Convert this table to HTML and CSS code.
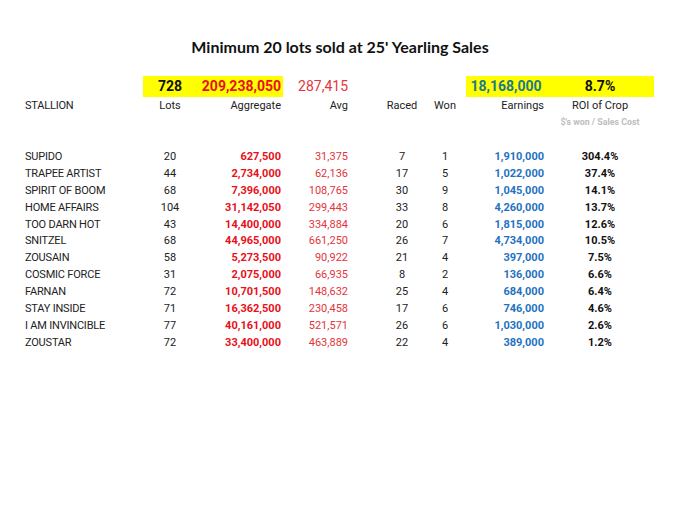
FILE: index.html
```html
<!DOCTYPE html>
<html>
<head>
<meta charset="utf-8">
<link rel="stylesheet" href="styles.css">
</head>
<body>
<h1 class="title">Minimum 20 lots sold at 25' Yearling Sales</h1>
<div class="sheet">
  <div class="row totals">
    <span></span>
    <span class="c hl tot-black">728</span>
    <span class="r hl tot-red">209,238,050</span>
    <span class="r avg-tot">287,415</span>
    <span></span>
    <span></span>
    <span class="c hl tot-teal">18,168,000</span>
    <span class="c hl tot-black">8.7%</span>
  </div>
  <div class="row labels">
    <span class="name">STALLION</span>
    <span class="c">Lots</span>
    <span class="r">Aggregate</span>
    <span class="r">Avg</span>
    <span class="c">Raced</span>
    <span class="c">Won</span>
    <span class="r">Earnings</span>
    <span class="c">ROI of Crop</span>
  </div>
  <div class="row sub">
    <span></span><span></span><span></span><span></span><span></span><span></span><span></span>
    <span class="c note">$'s won / Sales Cost</span>
  </div>
  <div class="rows">
    <div class="row data"><span class="name">SUPIDO</span><span class="c">20</span><span class="r agg">627,500</span><span class="r avg">31,375</span><span class="c">7</span><span class="c">1</span><span class="r earn">1,910,000</span><span class="c roi">304.4%</span></div>
    <div class="row data"><span class="name">TRAPEE ARTIST</span><span class="c">44</span><span class="r agg">2,734,000</span><span class="r avg">62,136</span><span class="c">17</span><span class="c">5</span><span class="r earn">1,022,000</span><span class="c roi">37.4%</span></div>
    <div class="row data"><span class="name">SPIRIT OF BOOM</span><span class="c">68</span><span class="r agg">7,396,000</span><span class="r avg">108,765</span><span class="c">30</span><span class="c">9</span><span class="r earn">1,045,000</span><span class="c roi">14.1%</span></div>
    <div class="row data"><span class="name">HOME AFFAIRS</span><span class="c">104</span><span class="r agg">31,142,050</span><span class="r avg">299,443</span><span class="c">33</span><span class="c">8</span><span class="r earn">4,260,000</span><span class="c roi">13.7%</span></div>
    <div class="row data"><span class="name">TOO DARN HOT</span><span class="c">43</span><span class="r agg">14,400,000</span><span class="r avg">334,884</span><span class="c">20</span><span class="c">6</span><span class="r earn">1,815,000</span><span class="c roi">12.6%</span></div>
    <div class="row data"><span class="name">SNITZEL</span><span class="c">68</span><span class="r agg">44,965,000</span><span class="r avg">661,250</span><span class="c">26</span><span class="c">7</span><span class="r earn">4,734,000</span><span class="c roi">10.5%</span></div>
    <div class="row data"><span class="name">ZOUSAIN</span><span class="c">58</span><span class="r agg">5,273,500</span><span class="r avg">90,922</span><span class="c">21</span><span class="c">4</span><span class="r earn">397,000</span><span class="c roi">7.5%</span></div>
    <div class="row data"><span class="name">COSMIC FORCE</span><span class="c">31</span><span class="r agg">2,075,000</span><span class="r avg">66,935</span><span class="c">8</span><span class="c">2</span><span class="r earn">136,000</span><span class="c roi">6.6%</span></div>
    <div class="row data"><span class="name">FARNAN</span><span class="c">72</span><span class="r agg">10,701,500</span><span class="r avg">148,632</span><span class="c">25</span><span class="c">4</span><span class="r earn">684,000</span><span class="c roi">6.4%</span></div>
    <div class="row data"><span class="name">STAY INSIDE</span><span class="c">71</span><span class="r agg">16,362,500</span><span class="r avg">230,458</span><span class="c">17</span><span class="c">6</span><span class="r earn">746,000</span><span class="c roi">4.6%</span></div>
    <div class="row data"><span class="name">I AM INVINCIBLE</span><span class="c">77</span><span class="r agg">40,161,000</span><span class="r avg">521,571</span><span class="c">26</span><span class="c">6</span><span class="r earn">1,030,000</span><span class="c roi">2.6%</span></div>
    <div class="row data"><span class="name">ZOUSTAR</span><span class="c">72</span><span class="r agg">33,400,000</span><span class="r avg">463,889</span><span class="c">22</span><span class="c">4</span><span class="r earn">389,000</span><span class="c roi">1.2%</span></div>
  </div>
</div>
</body>
</html>
```
FILE: styles.css
```css
html, body {
  margin: 0;
  padding: 0;
  background: #ffffff;
}
body {
  width: 680px;
  height: 506px;
  font-family: Roboto, "Liberation Sans", sans-serif;
  color: #222222;
}
.title {
  margin: 0;
  padding-top: 37px;
  height: 20px;
  line-height: 20px;
  text-align: center;
  font-family: Lato, "Open Sans", sans-serif;
  font-weight: 700;
  font-size: 16px;
  color: #111111;
}
.sheet {
  margin-top: 19px;
}
.row {
  display: grid;
  grid-template-columns: 143px 54px 86px 97px 44px 42px 80px 108px;
  white-space: nowrap;
}
.row > span {
  display: block;
}
.c { text-align: center; }
.r { text-align: right; }
.name {
  padding-left: 25px;
  letter-spacing: -0.2px;
}
.row > .r:nth-child(3) { padding-right: 2px; }
.row > .r:nth-child(4) { padding-right: 32px; }
.row > .r:nth-child(7) { padding-right: 2px; }

.totals {
  height: 21px;
  line-height: 21px;
  font-size: 14px;
}
.hl { background: #ffff00; }
.tot-black { font-weight: 700; color: #111111; }
.tot-red { font-weight: 700; color: #e8101a; }
.tot-teal { font-weight: 700; color: #1b7a8c; }
.avg-tot { color: #e4353c; }

.labels {
  height: 16px;
  line-height: 16px;
  font-size: 11px;
  margin-top: 1px;
}
.sub {
  height: 16px;
  line-height: 16px;
}
.note {
  font-size: 8.8px;
  font-weight: 700;
  color: #bdbdbd;
}
.rows {
  margin-top: 19px;
}
.data {
  height: 16.9px;
  line-height: 16.9px;
  font-size: 11px;
}
.agg { font-weight: 700; color: #e8101a; }
.avg { color: #e4353c; }
.earn { font-weight: 700; color: #2472bf; }
.roi { font-weight: 700; color: #111111; }
```
